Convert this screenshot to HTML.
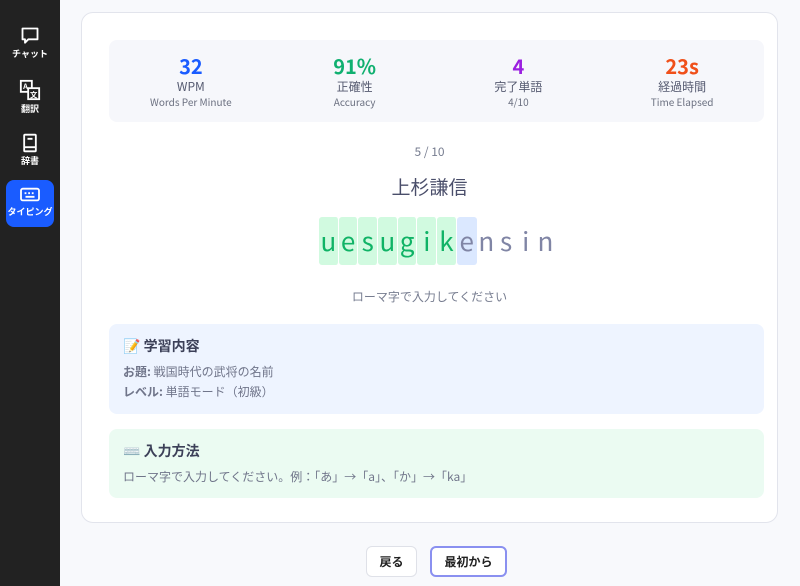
<!DOCTYPE html>
<html><head><meta charset="utf-8"><style>
*{box-sizing:border-box;margin:0;padding:0}
body{width:800px;height:586px;overflow:hidden;background:#f8f9fc;font-family:"Noto Sans CJK JP","Liberation Sans",sans-serif;position:relative}
.side{position:absolute;left:0;top:0;width:60px;height:586px;background:#222222}
.nav{position:absolute;left:6px;width:48px;color:#fff;font-size:9px;font-weight:bold;text-align:center;line-height:12px}
.nav svg{display:block;margin:0 auto 2px}
.act{background:#1a5cff;border-radius:8px;height:47px;top:180px;padding-top:6px}
.card{position:absolute;left:81px;top:12px;width:697px;height:511px;background:#fff;border:1px solid #e2e4ec;border-radius:12px}
.stats{position:absolute;left:27px;top:27px;width:655px;height:82px;background:#f6f7fb;border-radius:8px;display:flex}
.st{flex:1;text-align:center;padding-top:13px}
.st b{display:block;font-size:20px;line-height:26px}
.st .l{font-size:12px;color:#555a70;line-height:16px}
.st .s{font-size:10px;color:#6b7080;line-height:13px}
.cnt{position:absolute;top:130px;width:100%;text-align:center;font-size:12px;color:#777d90}
.word{position:absolute;top:160px;width:100%;text-align:center;font-size:19px;color:#4a4e6a}
.letters{position:absolute;left:237px;top:204px;display:flex}
.lt{width:19.7px;height:48px;font-size:26px;line-height:48px;text-align:center;color:#8085a5}
.g{background:#d1fae0;color:#10b366;border-radius:3px;border-right:1px solid #fff}
.b{background:#dbe8ff;border-radius:3px}
.hint{position:absolute;top:275px;width:100%;text-align:center;font-size:12px;color:#777d90}
.box{position:absolute;left:27px;width:655px;border-radius:8px;padding:12px 14px}
.box h3{font-size:14px;color:#3c4058;margin-bottom:6px}
.box p{font-size:12px;color:#70758a;line-height:20px}
.btn{position:absolute;top:546px;height:31px;background:#fff;border:1px solid #dfe1e8;border-radius:6px;font-size:12px;font-weight:bold;color:#222;text-align:center;line-height:29px}
</style></head><body>
<div class="side">
<div class="nav" style="top:26px"><svg width="20" height="20" viewBox="0 0 24 24" fill="none" stroke="#fff" stroke-width="2.2"><path d="M3 3h18v13H10l-4 4v-4H3z" stroke-linejoin="round"/></svg>チャット</div>
<div class="nav" style="top:79px"><svg width="22" height="22" viewBox="0 0 24 24" fill="none" stroke="#fff" stroke-width="2"><rect x="2" y="2" width="12" height="12"/><rect x="10" y="10" width="12" height="12" fill="#222"/><text x="4.5" y="11" font-size="8" fill="#fff" stroke="none" font-weight="bold">A</text><text x="12" y="20" font-size="8" fill="#fff" stroke="none">文</text></svg>翻訳</div>
<div class="nav" style="top:133px"><svg width="20" height="20" viewBox="0 0 24 24" fill="none" stroke="#fff" stroke-width="2.2"><rect x="5" y="2" width="14" height="20" rx="1"/><path d="M5 17h14M9 7h6"/></svg>辞書</div>
<div class="nav act"><svg width="22" height="18" viewBox="0 0 24 20" fill="none" stroke="#fff" stroke-width="2"><rect x="2" y="3" width="20" height="13" rx="2"/><path d="M6 8h2M10 8h2M14 8h2M18 8h0M7 12h10" /></svg>タイピング</div>
</div>
<div class="card">
<div class="stats">
<div class="st"><b style="color:#1a5cff">32</b><div class="l">WPM</div><div class="s">Words Per Minute</div></div>
<div class="st"><b style="color:#10b070">91%</b><div class="l">正確性</div><div class="s">Accuracy</div></div>
<div class="st"><b style="color:#9b20e0">4</b><div class="l">完了単語</div><div class="s">4/10</div></div>
<div class="st"><b style="color:#f0501a">23s</b><div class="l">経過時間</div><div class="s">Time Elapsed</div></div>
</div>
<div class="cnt">5 / 10</div>
<div class="word">上杉謙信</div>
<div class="letters"><div class="lt g">u</div><div class="lt g">e</div><div class="lt g">s</div><div class="lt g">u</div><div class="lt g">g</div><div class="lt g">i</div><div class="lt g">k</div><div class="lt b">e</div><div class="lt">n</div><div class="lt">s</div><div class="lt">i</div><div class="lt">n</div></div>
<div class="hint">ローマ字で入力してください</div>
<div class="box" style="top:311px;height:90px;background:#eef4ff"><h3>📝 学習内容</h3><p><b>お題:</b> 戦国時代の武将の名前</p><p><b>レベル:</b> 単語モード（初級）</p></div>
<div class="box" style="top:416px;height:69px;background:#ebfbf2"><h3>⌨️ 入力方法</h3><p>ローマ字で入力してください。例：「あ」→「a」、「か」→「ka」</p></div>
</div>
<div class="btn" style="left:366px;width:51px">戻る</div>
<div class="btn" style="left:430px;width:77px;border:2px solid #8a90f0;line-height:27px">最初から</div>
</body></html>
